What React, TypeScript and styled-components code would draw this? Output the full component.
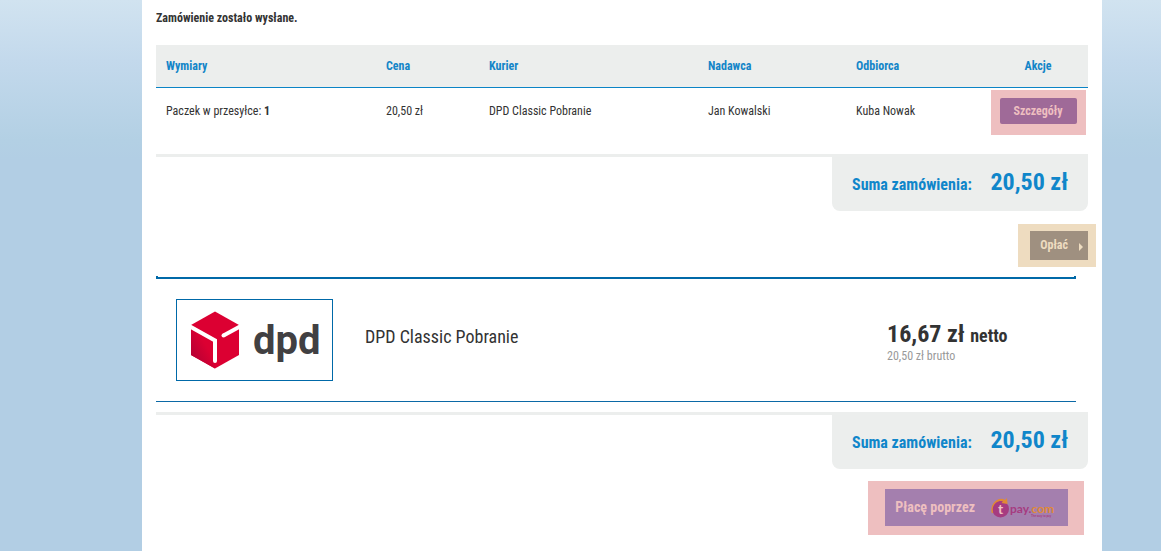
import React from "react";
import styled, { createGlobalStyle } from "styled-components";

const GlobalStyle = createGlobalStyle`
  *, *::before, *::after { box-sizing: border-box; }
  html { min-height: 100%; background: #b2cee4; }
  body {
    margin: 0;
    font-family: "Roboto Condensed", "Liberation Sans Narrow", Roboto, sans-serif;
    font-size: 12px;
    line-height: 16px;
    color: #333;
  }
`;

const Page = styled.div`
  min-height: 100vh;
  display: flex;
  justify-content: center;
  padding-left: 83px;
  background: linear-gradient(#d1e3f0 0, #c3d9ec 60px, #b3d0e4 140px, #b2cee4 160px);
`;

const Sheet = styled.main`
  flex: 1;
  max-width: 960px;
  padding: 10px 14px 16px;
  background: #fff;
`;

const Notice = styled.p`
  margin: 0 0 19px;
  font-weight: 700;
`;

const OrderTable = styled.table`
  width: 100%;
  table-layout: fixed;
  border-collapse: separate;
  border-spacing: 0;
`;

const Col = styled.col<{ $width: number }>`
  width: ${(p) => p.$width}px;
`;

const HeadCell = styled.th<{ $center?: boolean }>`
  height: 43px;
  padding: 0 10px;
  border-bottom: 1px solid #0b84c6;
  background: #eceeed;
  color: #1385c8;
  text-align: ${(p) => (p.$center ? "center" : "left")};
`;

const Cell = styled.td`
  height: 66px;
  padding: 15px 10px 0;
  vertical-align: top;

  b { font-weight: 700; }
`;

const ActionCell = styled.td`
  padding: 2px 0 0;
  vertical-align: top;
  text-align: center;
`;

const Mark = styled.div<{ $tone: string; $pad: string }>`
  display: inline-flex;
  vertical-align: top;
  padding: ${(p) => p.$pad};
  background: ${(p) => p.$tone};
`;

const Button = styled.button<{ $bg: string; $fg: string }>`
  display: flex;
  align-items: center;
  border: 0;
  background: ${(p) => p.$bg};
  color: ${(p) => p.$fg};
  font: inherit;
  font-weight: 700;
  cursor: pointer;
`;

const DetailsButton = styled(Button)`
  justify-content: center;
  width: 77px;
  height: 26px;
  padding: 0;
  border-radius: 2px;
`;

const PayButton = styled(Button)`
  height: 29px;
  gap: 10px;
  padding: 0 5px 2px 10px;

  svg { margin-top: 4px; }
`;

const TpayButton = styled(Button)`
  height: 37px;
  gap: 16px;
  padding: 0 12px 2px 10px;
  font-size: 14px;

  svg { margin-top: 2px; }
`;

const Summary = styled.div`
  display: flex;
  justify-content: flex-end;
  border-top: 3px solid #eceeed;
`;

const SummaryBox = styled.div`
  display: flex;
  align-items: baseline;
  justify-content: space-between;
  width: 256px;
  height: 54px;
  padding: 9px 20px 0;
  border-radius: 0 0 8px 8px;
  background: #eceeed;
  color: #1086ca;
  font-weight: 700;
`;

const SummaryLabel = styled.span`
  font-size: 16px;
`;

const SummaryValue = styled.span`
  font-size: 24px;
  line-height: 32px;
`;

const Actions = styled.div<{ $top: number; $right: number }>`
  display: flex;
  justify-content: flex-end;
  margin-top: ${(p) => p.$top}px;
  margin-right: ${(p) => p.$right}px;
`;

const Courier = styled.section`
  margin: 9px 12px 10px 0;
  border-bottom: 1px solid #0b69a6;
`;

const CourierEdge = styled.div`
  height: 3px;
  border: 2px solid #0069a8;
  border-top: 0;
`;

const CourierRow = styled.div`
  display: flex;
  align-items: flex-start;
  padding: 20px;
`;

const LogoFrame = styled.div`
  width: 157px;
  height: 82px;
  border: 1px solid #0069a8;
`;

const CourierName = styled.div`
  flex: 1;
  padding: 26px 0 0 32px;
  font-size: 18px;
  line-height: 24px;
`;

const CourierPrice = styled.div`
  width: 169px;
  padding-top: 22px;
`;

const Net = styled.div`
  font-size: 24px;
  line-height: 26px;
  font-weight: 700;

  small { font-size: 18px; }
`;

const Gross = styled.div`
  color: #999;
  line-height: 14px;
`;

function DpdLogo() {
  return (
    <svg width="155" height="80" viewBox="0 0 155 80" role="img" aria-label="dpd">
      <defs>
        <linearGradient id="dpdSide" x1="0" y1="1" x2="1" y2="0">
          <stop offset="0" stopColor="#a90034" />
          <stop offset="0.6" stopColor="#dc0032" />
        </linearGradient>
      </defs>
      <path d="M38 11.500 62 25v30L38 68.500 14 55V25z" fill="#dc0032" />
      <path d="M14 27 38 40v28.500L14 55z" fill="url(#dpdSide)" />
      <path d="M13 26.500 38 40.500V61" fill="none" stroke="#fff" strokeWidth="4" />
      <path d="M63 26.500 46.500 35.500" fill="none" stroke="#fff" strokeWidth="4" />
      <circle cx="38" cy="61" r="2" fill="#fff" />
      <circle cx="46.500" cy="35.500" r="2" fill="#fff" />
      <text x="76" y="54" fontFamily="Roboto, sans-serif" fontWeight="700" fontSize="40" fill="#414042">
        dpd
      </text>
    </svg>
  );
}

function TpayLogo() {
  return (
    <svg width="65" height="22" viewBox="0 0 65 22" role="img" aria-label="tpay.com">
      <circle cx="9.500" cy="12" r="8.500" fill="#a63b80" />
      <path d="M1.500 16C-.5 9 4 3 11 3" fill="none" stroke="#e08a35" strokeWidth="1.500" />
      <path d="M4 5C7 1.500 11 1 14 3l2-2 .5 6-6-1 1.500-1.500C9 3 6 4 4 5z" fill="#e08a35" />
      <text x="7" y="17" fontFamily="Lato, sans-serif" fontWeight="700" fontSize="14" fill="#eebfc0">t</text>
      <text x="19" y="16" fontFamily="Lato, sans-serif" fontSize="12" fill="#a63b80">
        pay.<tspan fill="#e08a35">com</tspan>
      </text>
      <text x="40" y="20" fontFamily="Lato, sans-serif" fontSize="3" fill="#a63b80">The way to pay</text>
    </svg>
  );
}

function Arrow() {
  return (
    <svg width="5" height="8" viewBox="0 0 5 8" aria-hidden="true">
      <path d="M1 0 5 4 1 8z" fill="#eedcc0" />
    </svg>
  );
}

function OrderTotal() {
  return (
    <Summary>
      <SummaryBox>
        <SummaryLabel>Suma zamówienia:</SummaryLabel>
        <SummaryValue>20,50 zł</SummaryValue>
      </SummaryBox>
    </Summary>
  );
}

const columnWidths = [220, 103, 219, 148, 142, 100];

export default function App() {
  return (
    <>
      <GlobalStyle />
      <Page>
        <Sheet>
          <Notice>Zamówienie zostało wysłane.</Notice>
          <OrderTable>
            <colgroup>
              {columnWidths.map((w) => (
                <Col key={w} $width={w} />
              ))}
            </colgroup>
            <thead>
              <tr>
                <HeadCell>Wymiary</HeadCell>
                <HeadCell>Cena</HeadCell>
                <HeadCell>Kurier</HeadCell>
                <HeadCell>Nadawca</HeadCell>
                <HeadCell>Odbiorca</HeadCell>
                <HeadCell $center>Akcje</HeadCell>
              </tr>
            </thead>
            <tbody>
              <tr>
                <Cell>Paczek w przesyłce: <b>1</b></Cell>
                <Cell>20,50 zł</Cell>
                <Cell>DPD Classic Pobranie</Cell>
                <Cell>Jan Kowalski</Cell>
                <Cell>Kuba Nowak</Cell>
                <ActionCell>
                  <Mark $tone="#eebfc0" $pad="8px 9px 11px">
                    <DetailsButton $bg="#9f6a98" $fg="#eebfc0">Szczegóły</DetailsButton>
                  </Mark>
                </ActionCell>
              </tr>
            </tbody>
          </OrderTable>
          <OrderTotal />
          <Actions $top={13} $right={-8}>
            <Mark $tone="#eedcc0" $pad="7px 8px 7px 12px">
              <PayButton $bg="#9f9080" $fg="#eedcc0">
                Opłać
                <Arrow />
              </PayButton>
            </Mark>
          </Actions>
          <Courier>
            <CourierEdge />
            <CourierRow>
              <LogoFrame>
                <DpdLogo />
              </LogoFrame>
              <CourierName>DPD Classic Pobranie</CourierName>
              <CourierPrice>
                <Net>
                  16,67 zł <small>netto</small>
                </Net>
                <Gross>20,50 zł brutto</Gross>
              </CourierPrice>
            </CourierRow>
          </Courier>
          <OrderTotal />
          <Actions $top={12} $right={4}>
            <Mark $tone="#eebfc0" $pad="8px 16px 9px 17px">
              <TpayButton $bg="#a47fae" $fg="#eebfc0">
                Płacę poprzez
                <TpayLogo />
              </TpayButton>
            </Mark>
          </Actions>
        </Sheet>
      </Page>
    </>
  );
}
